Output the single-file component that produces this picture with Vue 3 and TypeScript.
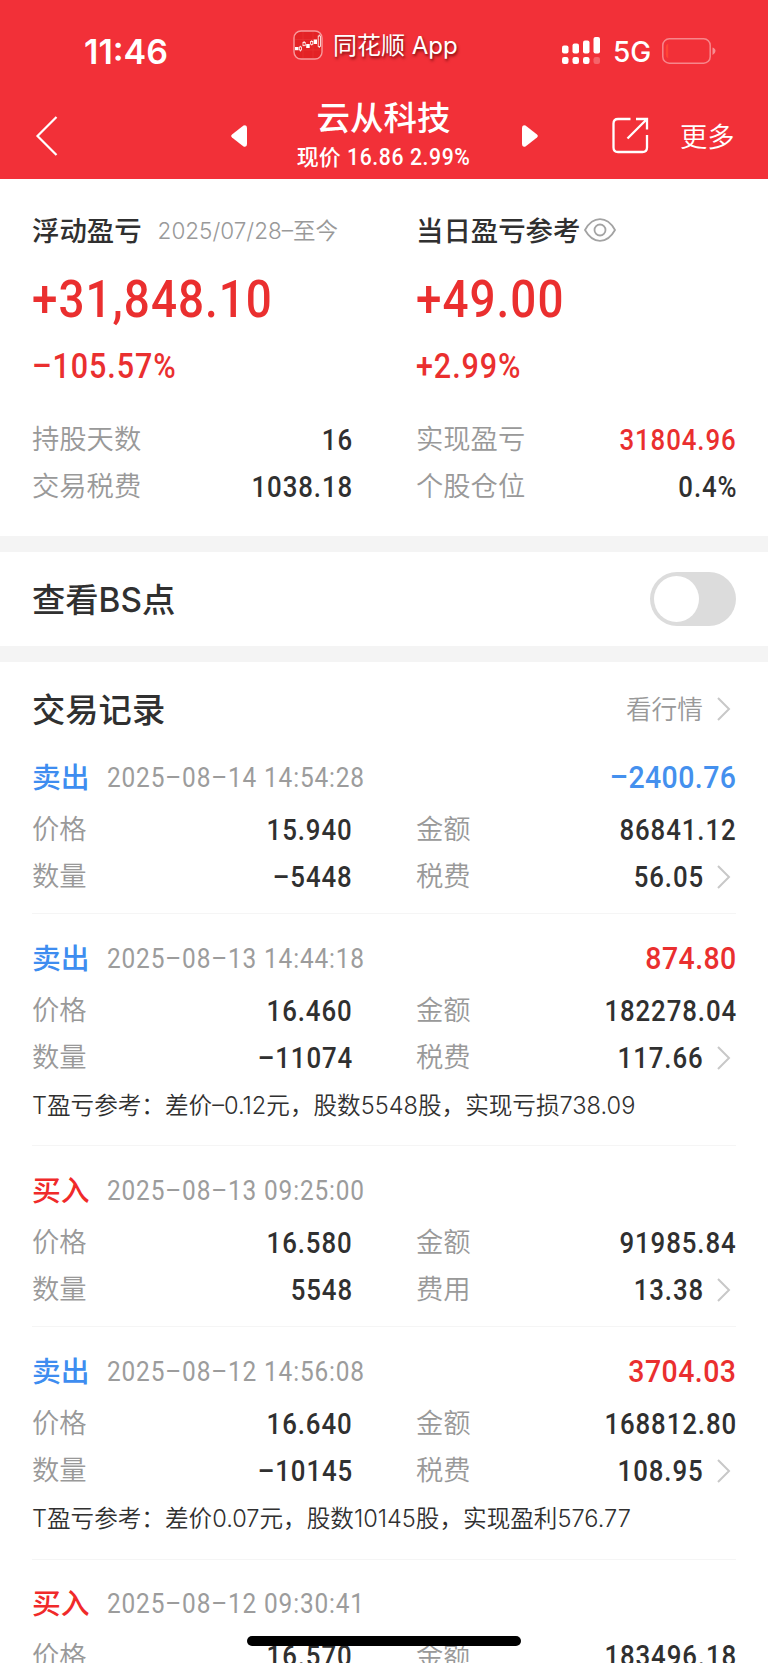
<script setup lang="ts">
interface Row {
  label: string
  value: string
  label2: string
  value2: string
}

interface TradeRecord {
  side: 'sell' | 'buy'
  time: string
  profit?: string
  tone?: 'up' | 'down'
  rows: Row[]
  note?: string
}

const summaryRows = [
  { label: '持股天数', value: '16', label2: '实现盈亏', value2: '31804.96', up: true },
  { label: '交易税费', value: '1038.18', label2: '个股仓位', value2: '0.4%', up: false },
]

function rows(price: string, amount: string, count: string, feeLabel: string, fee: string): Row[] {
  return [
    { label: '价格', value: price, label2: '金额', value2: amount },
    { label: '数量', value: count, label2: feeLabel, value2: fee },
  ]
}

const records: TradeRecord[] = [
  {
    side: 'sell', time: '2025–08–14 14:54:28', profit: '–2400.76', tone: 'down',
    rows: rows('15.940', '86841.12', '–5448', '税费', '56.05'),
  },
  {
    side: 'sell', time: '2025–08–13 14:44:18', profit: '874.80', tone: 'up',
    rows: rows('16.460', '182278.04', '–11074', '税费', '117.66'),
    note: 'T盈亏参考：差价–0.12元，股数5548股，实现亏损738.09',
  },
  {
    side: 'buy', time: '2025–08–13 09:25:00',
    rows: rows('16.580', '91985.84', '5548', '费用', '13.38'),
  },
  {
    side: 'sell', time: '2025–08–12 14:56:08', profit: '3704.03', tone: 'up',
    rows: rows('16.640', '168812.80', '–10145', '税费', '108.95'),
    note: 'T盈亏参考：差价0.07元，股数10145股，实现盈利576.77',
  },
  {
    side: 'buy', time: '2025–08–12 09:30:41',
    rows: [{ label: '价格', value: '16.570', label2: '金额', value2: '183496.18' }],
  },
]
</script>

<template>
  <div class="screen">
    <header class="header">
      <div class="status">
        <span class="clock">11:46</span>
        <div class="source">
          <svg class="app-icon" width="30" height="30" viewBox="0 0 30 30">
            <rect x="1" y="1" width="28" height="28" rx="7" fill="#e32225" stroke="#f89a9c" stroke-width="1.4" />
            <path d="M2 9.5H28M2 20H28M10 2V28M20 2V28" stroke="#e8393b" stroke-width=".5" />
            <g fill="#fff">
              <rect x="2" y="17" width="3.500" height="3.200" />
              <rect x="13.200" y="14" width="3.500" height="4" />
              <rect x="20.700" y="9.500" width="3.300" height="4.500" />
            </g>
            <g fill="none" stroke="#fff" stroke-width=".8">
              <rect x="6.300" y="17" width="2.200" height="3" />
              <rect x="10" y="12.500" width="2.200" height="3.200" />
              <rect x="17.600" y="11.500" width="2.200" height="2.800" />
              <rect x="25.200" y="6" width="2.200" height="10.500" />
              <path d="M7.400 15.800v1.200M7.400 20v1.500M11.100 11v1.500M18.700 10.300v1.200M18.700 14.300v1.200M26.300 4.500v1.500M26.300 16.500v1.500" />
            </g>
          </svg>
          <span>同花顺 App</span>
        </div>
        <div class="signals">
          <svg width="39" height="28" viewBox="0 0 39 28" fill="#fff">
            <rect x="0" y="8.500" width="6.500" height="8" rx="2" />
            <rect x="10.500" y="6.500" width="6.500" height="10" rx="2" />
            <rect x="21" y="3.500" width="6.500" height="13" rx="2" />
            <rect x="31.500" y="0" width="6.500" height="16.500" rx="2" />
            <rect x="0" y="20" width="6.500" height="7" rx="2.200" />
            <rect x="10.500" y="20" width="6.500" height="7" rx="2.200" />
            <rect x="21" y="20" width="6.500" height="7" rx="2.200" />
            <rect x="31.500" y="20" width="6.500" height="7" rx="2.200" opacity=".25" />
          </svg>
          <span class="network">5G</span>
          <svg width="54" height="26" viewBox="0 0 54 26">
            <rect x=".8" y=".8" width="47.400" height="24.400" rx="6.500" fill="none" stroke="#fff" stroke-opacity=".42" stroke-width="1.500" />
            <path d="M6.200 5.500v15Q3.800 19.500 3.800 16.500v-7.500Q3.800 6.500 6.200 5.500z" fill="#ff4535" />
            <path d="M50.500 9.500Q53.500 10.500 53.500 13T50.500 17z" fill="#fff" opacity=".45" />
          </svg>
        </div>
      </div>
      <div class="nav">
        <svg class="back" width="24" height="42" viewBox="0 0 24 42">
          <path d="M21.500 2 2.500 21 21.500 40" fill="none" stroke="#fff" stroke-width="2.200" />
        </svg>
        <svg class="prev" width="16" height="22" viewBox="0 0 16 22">
          <path d="M12.500 .6Q16 -.6 16 3V19Q16 22.600 12.500 21.400L1 12.500Q-.6 11 1 9.500z" fill="#fff" />
        </svg>
        <div class="title">
          <div class="name">云从科技</div>
          <div class="quote">现价 <span>16.86 2.99%</span></div>
        </div>
        <svg class="next" width="16" height="22" viewBox="0 0 16 22">
          <path d="M3.500 .6Q0 -.6 0 3V19Q0 22.600 3.500 21.400L15 12.500Q16.600 11 15 9.500z" fill="#fff" />
        </svg>
        <svg class="share" width="37" height="37" viewBox="0 0 37 37">
          <path d="M18.500 2H6Q1.500 2 1.500 6.500V30.500Q1.500 35 6 35H30.500Q35 35 35 30.500V18M24 2H35V12.500M34.500 2.500 15.500 21.500" fill="none" stroke="#fff" stroke-width="2.300" />
        </svg>
        <span class="more">更多</span>
      </div>
    </header>

    <section class="summary">
      <div class="halves">
        <div class="half">
          <div class="caption">浮动盈亏<span class="since">2025/07/28–至今</span></div>
          <div class="big num">+31,848.10</div>
          <div class="rate num">–105.57%</div>
        </div>
        <div class="half">
          <div class="caption">
            当日盈亏参考
            <svg class="eye" width="32" height="24" viewBox="0 0 32 24" fill="none" stroke="#a3a3a3" stroke-width="1.800">
              <path d="M1 12Q7 1.200 16 1.200T31 12Q25 22.800 16 22.800T1 12z" />
              <circle cx="16" cy="12" r="5.500" />
            </svg>
          </div>
          <div class="big num">+49.00</div>
          <div class="rate num">+2.99%</div>
        </div>
      </div>
      <div v-for="row in summaryRows" :key="row.label" class="halves row">
        <div class="cell"><span class="label">{{ row.label }}</span><span class="value num">{{ row.value }}</span></div>
        <div class="cell"><span class="label">{{ row.label2 }}</span><span class="value num" :class="{ up: row.up }">{{ row.value2 }}</span></div>
      </div>
    </section>

    <section class="switch-row">
      <span class="heading">查看BS点</span>
      <span class="toggle"><i /></span>
    </section>

    <section class="list">
      <div class="list-head">
        <span class="heading">交易记录</span>
        <span class="market"><span>看行情</span>
          <svg class="chevron" width="14" height="24" viewBox="0 0 14 24"><path d="M1 1 12 12 1 23" /></svg>
        </span>
      </div>
      <article v-for="record in records" :key="record.time" class="record">
        <div class="record-head">
          <span class="side" :class="record.side">{{ record.side === 'sell' ? '卖出' : '买入' }}</span>
          <span class="time">{{ record.time }}</span>
          <span v-if="record.profit" class="profit num" :class="record.tone">{{ record.profit }}</span>
        </div>
        <div v-for="(row, i) in record.rows" :key="row.label" class="halves row">
          <div class="cell"><span class="label">{{ row.label }}</span><span class="value num">{{ row.value }}</span></div>
          <div class="cell">
            <span class="label">{{ row.label2 }}</span><span class="value num">{{ row.value2 }}</span>
            <svg v-if="i === 1" class="chevron" width="14" height="24" viewBox="0 0 14 24"><path d="M1 1 12 12 1 23" /></svg>
          </div>
        </div>
        <div v-if="record.note" class="note">{{ record.note }}</div>
      </article>
    </section>
    <div class="home-bar" />
  </div>
</template>

<style>
body {
  margin: 0;
  background: #fff;
}
</style>

<style scoped>
.screen {
  position: relative;
  width: 768px;
  height: 1663px;
  overflow: hidden;
  background: #fff;
  color: #303030;
  font-family: Inter, "Noto Sans CJK SC", sans-serif;
  white-space: nowrap;
}
/* Condensed numerals: Roboto squeezed horizontally, with looser tracking */
.num {
  font-family: Roboto, "Noto Sans CJK SC", sans-serif;
  font-weight: 500;
  letter-spacing: .035em;
  transform: scaleX(.89);
  transform-origin: left center;
}
.header {
  height: 179px;
  background: #f23038;
  color: #fff;
}
.status {
  display: flex;
  height: 92px;
}
.clock {
  width: 208px;
  margin-left: 84px;
  padding-top: 31px;
  font-size: 34px;
  line-height: 42px;
  font-weight: 600;
}
.source {
  display: flex;
  align-items: center;
  gap: 10px;
  width: 269px;
  height: 89px;
  margin-left: 1px;
  font-size: 24px;
  text-shadow: 1px 2px 3px rgba(80, 0, 0, .75);
}
.source span {
  padding-bottom: 2px;
}
.signals {
  display: flex;
  align-items: center;
  height: 102px;
}
.network {
  width: 61px;
  padding: 2px 0 0 12px;
  box-sizing: border-box;
  font-size: 28px;
  font-weight: 500;
}
.nav {
  display: flex;
  align-items: center;
  height: 87px;
}
.back {
  margin-left: 35px;
}
.prev {
  margin-left: 172px;
}
.title {
  width: 275px;
  text-align: center;
}
.name {
  margin-right: 2px;
  font-size: 33.500px;
  line-height: 42px;
  font-weight: 500;
}
.quote {
  margin-left: 15px;
  padding-top: 1px;
  font-size: 22px;
  line-height: 35px;
  font-weight: 500;
}
.quote span {
  display: inline-block;
  font-family: Roboto, sans-serif;
  font-size: 24px;
  letter-spacing: .03em;
  transform: scaleX(.88);
  transform-origin: left center;
}
.share {
  margin-left: 74px;
}
.more {
  margin-left: 31px;
  padding-bottom: 2px;
  font-size: 27.300px;
  font-weight: 350;
}
.summary {
  height: 325px;
  padding: 32px 32px 0;
}
.halves {
  display: grid;
  grid-template-columns: 320px 320px;
  column-gap: 64px;
}
.caption {
  display: flex;
  align-items: center;
  height: 36px;
  padding-bottom: 2px;
  font-size: 27.400px;
  font-weight: 500;
}
.since {
  margin-left: 16px;
  font-size: 22.500px;
  font-weight: 350;
  color: #999;
}
.eye {
  margin: 2px 0 0 4px;
}
.big {
  height: 101px;
  line-height: 101px;
  font-size: 51.500px;
  letter-spacing: .022em;
  color: #ea2f2f;
}
.rate {
  height: 32px;
  line-height: 32px;
  margin-bottom: 34px;
  font-size: 34.300px;
  letter-spacing: .03em;
  color: #ea2f2f;
}
.row {
  height: 47px;
}
.cell {
  display: flex;
  align-items: center;
  height: 47px;
}
.label {
  flex: 1;
  padding-bottom: 5px;
  font-size: 27.300px;
  font-weight: 350;
  color: #999;
}
.value {
  margin-right: -.035em;
  font-size: 29px;
  transform-origin: right center;
}
.up {
  color: #ea2f2f;
}
.down {
  color: #4490ee;
}
.chevron {
  flex: none;
  margin: 0 5px 0 14px;
  fill: none;
  stroke: #c8c8c8;
  stroke-width: 2;
}
.switch-row {
  display: flex;
  align-items: center;
  justify-content: space-between;
  height: 94px;
  padding: 0 32px;
  border-top: 16px solid #f4f4f4;
  border-bottom: 16px solid #f4f4f4;
}
.heading {
  padding-bottom: 4px;
  font-size: 33.300px;
  font-weight: 500;
}
.toggle {
  box-sizing: border-box;
  width: 86px;
  height: 54px;
  padding: 4px;
  border-radius: 27px;
  background: #dcdcdc;
}
.toggle i {
  display: block;
  width: 45px;
  height: 46px;
  border-radius: 50%;
  background: #fff;
}
.list {
  padding: 0 32px;
}
.list-head {
  display: flex;
  align-items: center;
  justify-content: space-between;
  height: 46px;
  padding: 24px 0 0;
}
.market {
  display: flex;
  align-items: center;
  font-size: 25.700px;
  font-weight: 350;
  color: #999;
}
.market span {
  padding-bottom: 4px;
}
.record {
  box-sizing: border-box;
  padding: 15px 0 13.100px;
  border-top: 1.500px solid #f5f5f5;
}
.list-head + .record {
  border-top-color: transparent;
}
.record:has(.note) {
  padding-bottom: 16.200px;
}
.record-head {
  display: flex;
  align-items: center;
  height: 58px;
}
.side {
  margin-right: 17px;
  padding-bottom: 4px;
  font-size: 28.800px;
  font-weight: 500;
}
.sell {
  color: #3e8df0;
}
.buy {
  color: #f02a2a;
}
.time {
  font-family: Roboto, sans-serif;
  font-size: 27.500px;
  font-weight: 400;
  letter-spacing: .034em;
  color: #9c9c9c;
  transform: scaleX(.888);
  transform-origin: left center;
}
.profit {
  margin: 0 -.01em 0 auto;
  font-size: 32px;
  letter-spacing: .015em;
  transform-origin: right center;
}
.note {
  height: 46px;
  padding-top: 2px;
  line-height: 46px;
  font-size: 23.600px;
  font-weight: 350;
}
.home-bar {
  position: absolute;
  left: 247px;
  top: 1636px;
  width: 274px;
  height: 10px;
  border-radius: 5px;
  background: #000;
}
</style>
